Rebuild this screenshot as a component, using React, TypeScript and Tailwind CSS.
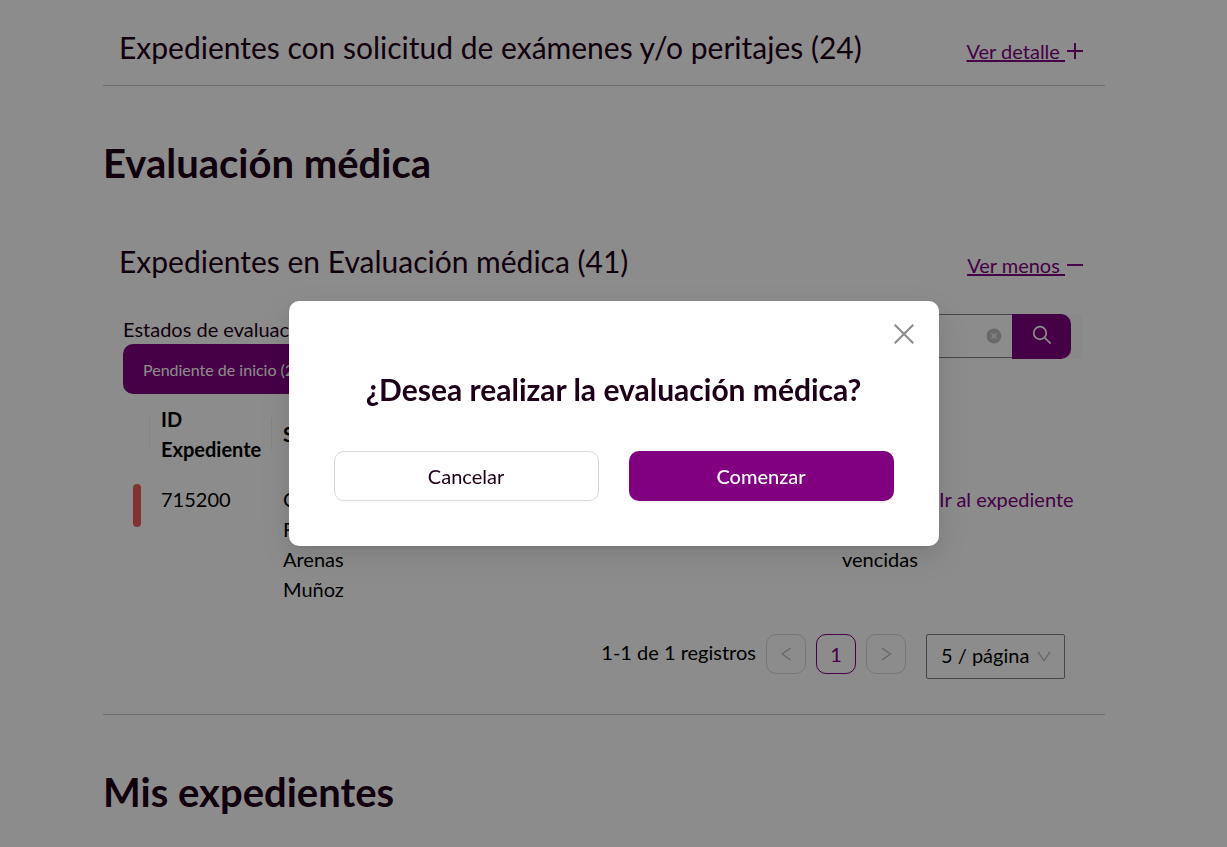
import type { ReactNode } from "react";

const stroke = {
  fill: "none",
  stroke: "currentColor",
  "aria-hidden": true,
} as const;

function PlusIcon() {
  return (
    <svg {...stroke} viewBox="0 0 20 20" className="size-5" strokeWidth="1.9">
      <path d="M2 10h16M10 2v16" />
    </svg>
  );
}

function MinusIcon() {
  return (
    <svg {...stroke} viewBox="0 0 20 20" className="size-5" strokeWidth="1.9">
      <path d="M2 10h16" />
    </svg>
  );
}

function SearchIcon() {
  return (
    <svg {...stroke} viewBox="0 0 20 20" className="size-5" strokeWidth="1.7">
      <circle cx="8" cy="8" r="6.3" />
      <path d="M12.500 12.500L18.700 18.700" />
    </svg>
  );
}

function ClearIcon() {
  return (
    <svg viewBox="0 0 16 16" className="size-4" aria-hidden="true">
      <circle cx="8" cy="8" r="7.5" fill="currentColor" />
      <path d="M5.400 5.400l5.200 5.200M10.600 5.400l-5.200 5.200" stroke="#fff" strokeWidth="1.1" />
    </svg>
  );
}

function CloseIcon() {
  return (
    <svg {...stroke} viewBox="0 0 20 20" className="size-5" strokeWidth="2.1">
      <path d="M.7.7l18.600 18.600M19.300.7L.7 19.300" />
    </svg>
  );
}

function Chevron({ d }: { d: string }) {
  return (
    <svg {...stroke} viewBox="0 0 16 16" className="size-4" strokeWidth="1.4">
      <path d={d} />
    </svg>
  );
}

function PanelHeader({ title, action, icon }: { title: string; action: string; icon: ReactNode }) {
  return (
    <div className="flex items-center justify-between pr-5 pl-4">
      <h3 className="text-[30px] leading-12">{title}</h3>
      <a href="#" className="flex items-center pt-2 text-[#800080]">
        <span className="whitespace-pre underline decoration-2">{action + " "}</span>
        {icon}
      </a>
    </div>
  );
}

function SectionTitle({ children }: { children: ReactNode }) {
  return <h2 className="text-[40px] leading-12 font-bold">{children}</h2>;
}

const columns = ["ID Expediente", "Solicitante", "RUN", "Fecha", "Estado", ""];

function RecordsTable() {
  return (
    <table className="w-full table-fixed text-left text-black">
      <colgroup>
        <col className="w-[27px]" />
        <col className="w-[122px]" />
        <col className="w-[160px]" />
        <col />
        <col />
        <col className="w-[97px]" />
        <col className="w-[155px]" />
      </colgroup>
      <thead>
        <tr>
          <th className="p-0">
            <span className="ml-auto block h-8 w-px bg-[#f0f0f0]" />
          </th>
          {columns.map((name, i) => (
            <th key={i} className="p-0 font-bold">
              <div className="flex items-center py-[10px] pl-[11px]">
                <span className="flex-1">{name}</span>
                {i < 4 && <span className="h-8 w-px bg-[#f0f0f0]" />}
              </div>
            </th>
          ))}
        </tr>
      </thead>
      <tbody>
        <tr className="align-top">
          <td className="py-[10px] pl-[10px]">
            <span className="block h-[43px] w-2 rounded bg-[#f05a5a]" />
          </td>
          <td className="py-[10px] pl-[11px]">715200</td>
          <td className="py-[10px] pl-[11px]">
            Carlos
            <br />
            Felipe
            <br />
            Arenas
            <br />
            Muñoz
          </td>
          <td />
          <td />
          <td className="py-[10px] pl-[11px]">
            2
            <br />
            alertas
            <br />
            vencidas
          </td>
          <td className="py-[10px] pl-[11px]">
            <a href="#" className="whitespace-nowrap text-[#800080]">
              Ir al expediente
            </a>
          </td>
        </tr>
      </tbody>
    </table>
  );
}

function Pagination() {
  const box = "flex size-10 items-center justify-center rounded-[10px] border";
  return (
    <div className="mt-5 flex items-start justify-end gap-[10px] pr-[18px] text-black">
      <span className="leading-9">1-1 de 1 registros</span>
      <button type="button" disabled aria-label="Anterior" className={box + " border-[#d9d9d9] text-black/25"}>
        <Chevron d="M12.500 2.200L4 8l8.500 5.800" />
      </button>
      <button type="button" className={box + " border-[#800080] text-[#800080]"}>
        1
      </button>
      <button type="button" disabled aria-label="Siguiente" className={box + " border-[#d9d9d9] text-black/25"}>
        <Chevron d="M4 2.200L12.500 8L4 13.800" />
      </button>
      <div className="ml-[10px] grid items-center">
        <select
          aria-label="Registros por página"
          className="col-start-1 row-start-1 h-[45px] w-[139px] appearance-none rounded-xs border border-[#808080] pb-[3px] pl-[14px]"
        >
          <option>5 / página</option>
        </select>
        <span className="pointer-events-none col-start-1 row-start-1 mr-[13px] justify-self-end text-black/25">
          <Chevron d="M2.200 3L8 11.800L13.800 3" />
        </span>
      </div>
    </div>
  );
}

function ConfirmDialog() {
  return (
    <div className="fixed inset-0 flex items-start justify-center bg-black/45 pt-[301px]">
      <div
        role="dialog"
        aria-modal="true"
        aria-labelledby="dialog-title"
        className="w-[650px] rounded-[10px] bg-white px-[45px] pb-[45px] shadow-[0_8px_20px_rgba(0,0,0,0.08),0_4px_8px_-5px_rgba(0,0,0,0.12),0_11px_35px_10px_rgba(0,0,0,0.05)]"
      >
        <div className="-mr-[20px] flex justify-end pt-[23px]">
          <button type="button" aria-label="Cerrar" className="text-black/45">
            <CloseIcon />
          </button>
        </div>
        <h2 id="dialog-title" className="mt-[21px] text-center text-[30px] leading-12 font-bold">
          ¿Desea realizar la evaluación médica?
        </h2>
        <div className="mt-[38px] grid grid-cols-2 gap-[30px]">
          <button
            type="button"
            className="h-[50px] rounded-[10px] border border-[#d9d9d9] shadow-[0_2px_0_rgba(0,0,0,0.02)]"
          >
            Cancelar
          </button>
          <button
            type="button"
            className="h-[50px] rounded-[10px] bg-[#800080] font-medium text-white shadow-[0_2px_0_rgba(0,0,0,0.04)]"
          >
            Comenzar
          </button>
        </div>
      </div>
    </div>
  );
}

export default function App() {
  return (
    <div className="min-h-screen bg-white font-[Lato,sans-serif] text-[20px] leading-[30px] text-[#1d0017]">
      <main className="pt-[23px] pr-[122px] pb-[30px] pl-[103px]">
        <section className="border-b border-[#c8c8c8] pb-[14px]">
          <PanelHeader
            title="Expedientes con solicitud de exámenes y/o peritajes (24)"
            action="Ver detalle"
            icon={<PlusIcon />}
          />
        </section>

        <div className="mt-[53px]">
          <SectionTitle>Evaluación médica</SectionTitle>
        </div>

        <section className="mt-[50px] border-b border-[#c8c8c8] pb-[35px]">
          <PanelHeader title="Expedientes en Evaluación médica (41)" action="Ver menos" icon={<MinusIcon />} />
          <div className="pr-[22px] pl-5">
            <div className="mt-[29px] flex items-start justify-between">
              <div>
                <p>Estados de evaluación</p>
                <button
                  type="button"
                  className="h-[50px] rounded-[10px] bg-[#800080] px-5 pt-0.5 text-[16px] text-white"
                >
                  Pendiente de inicio (2)
                </button>
              </div>
              <form className="flex bg-[#fafafa] pr-3">
                <div className="flex h-11 items-center border border-r-0 border-[#808080] bg-white pr-[10px]">
                  <input aria-label="Buscar expediente" className="w-[260px] px-3 outline-none" />
                  <button type="button" aria-label="Limpiar" className="text-black/25">
                    <ClearIcon />
                  </button>
                </div>
                <button
                  type="button"
                  aria-label="Buscar"
                  className="flex h-[45px] w-[59px] items-center justify-center rounded-r-[10px] bg-[#800080] pb-1 text-white"
                >
                  <SearchIcon />
                </button>
              </form>
            </div>
            <RecordsTable />
            <Pagination />
          </div>
        </section>

        <div className="mt-[53px]">
          <SectionTitle>Mis expedientes</SectionTitle>
        </div>
      </main>
      <ConfirmDialog />
    </div>
  );
}
